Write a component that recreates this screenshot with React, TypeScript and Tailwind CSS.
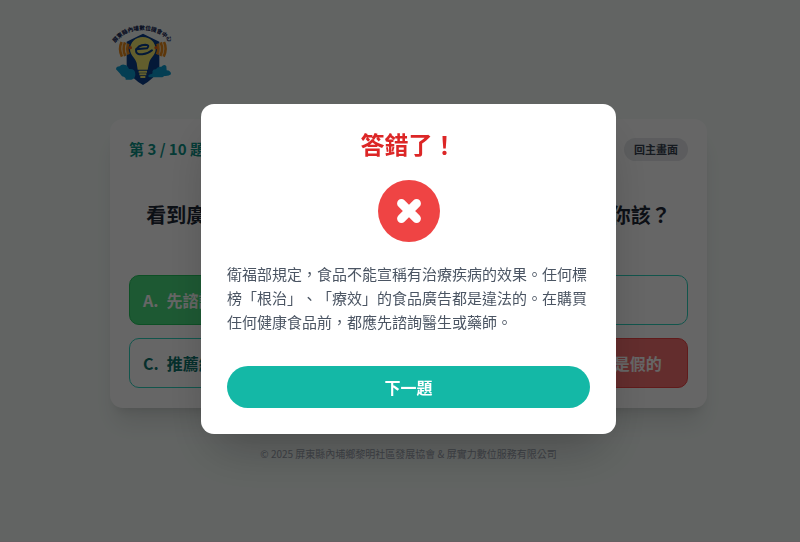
import React, { useState } from 'react';

type OptionState = 'idle' | 'correct' | 'wrong';

interface Option {
  label: string;
  text: string;
  state: OptionState;
}

const OPTIONS: Option[] = [
  { label: 'A', text: '先諮詢醫生或藥師', state: 'correct' },
  { label: 'B', text: '馬上購買', state: 'idle' },
  { label: 'C', text: '推薦給親朋好友', state: 'idle' },
  { label: 'D', text: '認為所有網路上的廣告是假的', state: 'wrong' }
];

const OPTION_STYLES: Record<OptionState, string> = {
  idle: 'bg-white border-[#2dd4bf] text-[#0f766e]',
  correct: 'bg-[#4ade80] border-[#22c55e] text-white',
  wrong: 'bg-[#f87171] border-[#ef4444] text-white'
};

const Logo: React.FC = () => (
  <svg width="64" height="66" viewBox="30 18 192 198" role="img" aria-label="屏東縣內埔數位機會中心">
    <defs>
      <path id="logo-arc" d="M45 84 Q76 45 128 45 Q180 45 212 86" />
    </defs>
    <text fontSize="17" fontWeight="900" fill="#1e2f5c">
      <textPath href="#logo-arc">屏東縣內埔數位機會中心</textPath>
    </text>

    {/* shield */}
    <path d="M129 56 L178 80 V164 Q160 192 129 210 Q98 192 80 164 V80 Z" fill="#0b3f8c" />

    {/* clouds */}
    <path
      d="M48 163 Q48 154 59 154 Q63 148 72 149 Q82 149 87 162 Q106 160 106 178 Q106 193 94 194 H77 Q78 186 66 184 Q59 174 48 163 Z"
      fill="#0b9bd0"
    />
    <path
      d="M168 163 Q172 154 184 155 Q193 145 199 154 L200 166 Q213 167 213 178 Q207 184 193 183 L187 187 H148 Q140 183 151 178 Q160 176 157 170 Q159 162 168 163 Z"
      fill="#0b9bd0"
    />

    {/* bulb */}
    <path
      d="M128 66 C107 66 90 82 90 103 C90 121 105 127 110 144 L113 164 H143 L147 144 C151 127 167 121 167 103 C167 82 150 66 128 66 Z"
      fill="#f5ec70"
    />
    <path d="M116 170 H141 M118 178 H139 M121 186 H136" stroke="#f5ec70" strokeWidth="6" />

    {/* letter mark */}
    <path
      d="M108 103 L141 100 Q151 90 136 89 Q113 90 108 107 Q108 119 127 118 Q145 116 156 106"
      fill="none"
      stroke="#0b3f8c"
      strokeWidth="6"
      strokeLinecap="round"
      strokeLinejoin="round"
    />

    {/* sound waves */}
    <g fill="none" stroke="#e98a1c" strokeWidth="8">
      <path d="M65 81 Q55 101 66 125" />
      <path d="M75 82 Q66 102 76 123" />
      <path d="M85 86 Q78 102 86 118" />
      <path d="M192 81 Q202 101 191 125" />
      <path d="M182 82 Q191 102 181 123" />
      <path d="M172 86 Q179 102 171 118" />
    </g>
    <g fill="none" stroke="#f7c27a" strokeWidth="2">
      <path d="M70 82 Q61 102 71 124" />
      <path d="M80 85 Q72 102 81 120" />
      <path d="M187 82 Q196 102 186 124" />
      <path d="M177 85 Q185 102 176 120" />
    </g>
    <circle cx="91" cy="98" r="5" fill="#e9601c" />
    <circle cx="168" cy="98" r="5" fill="#e9601c" />
  </svg>
);

const QuizCard: React.FC = () => (
  <main className="rounded-[13px] bg-white px-[19px] pt-[19px] pb-5 shadow-xl">
    <div className="flex h-[23px] items-center justify-between">
      <p className="text-[15px] font-bold text-[#0d9488]">第 3 / 10 題</p>
      <button type="button" className="h-[23px] rounded-full bg-[#e5e7eb] px-[10px] text-[11px] font-bold text-[#374151]">
        回主畫面
      </button>
    </div>

    <h2 className="mt-10 mb-[46px] text-center text-[20px] leading-7 font-bold whitespace-nowrap text-[#1f2937]">
      看到廣告說某種健康食品可以根治糖尿病、高血壓， 你該？
    </h2>

    <div className="grid grid-cols-2 gap-[13px]">
      {OPTIONS.map((option) => (
        <button
          key={option.label}
          type="button"
          className={`flex h-[50px] items-center rounded-[10px] border px-[13px] text-[16px] font-bold whitespace-nowrap ${OPTION_STYLES[option.state]}`}
        >
          <span className="mr-2">{option.label}.</span>
          {option.text}
        </button>
      ))}
    </div>
  </main>
);

const ResultDialog: React.FC<{ onNext: () => void }> = ({ onNext }) => (
  <div className="fixed inset-0 flex items-center justify-center bg-black/60 pb-1 pl-[17px]">
    <div
      role="dialog"
      aria-modal="true"
      aria-labelledby="result-title"
      className="w-full max-w-[415px] rounded-[13px] bg-white p-[26px] shadow-2xl"
    >
      <h3 id="result-title" className="mb-[22px] text-center text-[24px] leading-7 font-bold text-[#dc2626]">
        答錯了！
      </h3>
      <div className="mx-auto mb-5 flex size-[62px] items-center justify-center rounded-full bg-[#ef4444]">
        <svg width="26" height="26" viewBox="0 0 24 24" aria-hidden="true">
          <path d="M5 5 L19 19 M19 5 L5 19" stroke="white" strokeWidth="8" strokeLinecap="round" />
        </svg>
      </div>
      <p className="text-[15px] leading-6 text-[#4b5563] [text-spacing-trim:space-all]">
        衛福部規定，食品不能宣稱有治療疾病的效果。任何標榜「根治」、「療效」的食品廣告都是違法的。在購買任何健康食品前，都應先諮詢醫生或藥師。
      </p>
      <button
        type="button"
        onClick={onNext}
        className="mt-8 h-[42px] w-full rounded-full bg-[#14b8a6] text-[16px] font-bold text-white"
      >
        下一題
      </button>
    </div>
  </div>
);

const App: React.FC = () => {
  const [showResult, setShowResult] = useState(true);

  return (
    <div className="min-h-screen border-b border-[#fdeef4] bg-[#f5fbf8] pt-[21px] pl-[17px] font-['Noto_Sans_CJK_TC',sans-serif]">
      <div className="mx-auto max-w-[597px]">
        <header className="mb-8 h-[66px]">
          <Logo />
        </header>
        <QuizCard />
        <footer className="mt-[38px] text-center text-[10px] leading-4 text-[#9ca3af]">
          © 2025 屏東縣內埔鄉黎明社區發展協會 &amp; 屏實力數位服務有限公司
        </footer>
      </div>

      {showResult && <ResultDialog onNext={() => setShowResult(false)} />}
    </div>
  );
};

export default App;
